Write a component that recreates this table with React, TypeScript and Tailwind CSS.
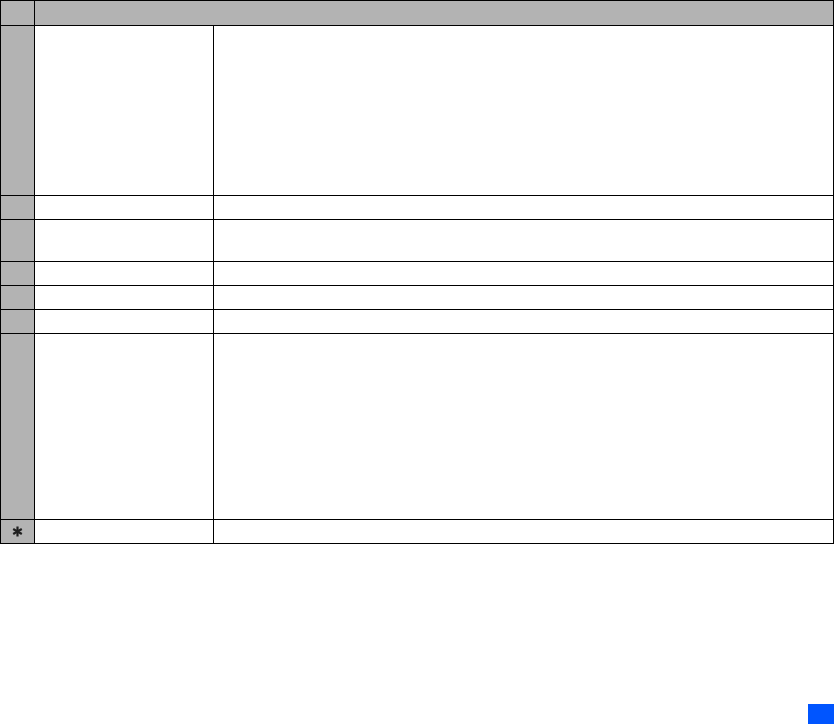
import React from 'react';

// row heights between the horizontal rules, header excluded
const rows = [170, 24, 42, 24, 24, 24, 186];

const Asterisk: React.FC = () => (
  <svg width="11" height="11" viewBox="0 0 11 11" className="block">
    <g stroke="#1f1f1f" strokeWidth="2.2" strokeLinecap="butt">
      <line x1="5.5" y1="0.5" x2="5.5" y2="10.5" />
      <line x1="1.2" y1="3" x2="9.8" y2="8" />
      <line x1="1.2" y1="8" x2="9.8" y2="3" />
    </g>
  </svg>
);

const App: React.FC = () => {
  return (
    <div className="flex h-[724px] w-[835px] flex-col overflow-hidden bg-white font-['Liberation_Sans',sans-serif]">
      <div className="w-[834px] border-l border-t border-black">
        {/* header */}
        <div className="flex h-[25px]">
          <div className="w-[34px] border-b border-r border-black bg-[#b3b3b3]" />
          <div className="w-[799px] border-b border-r border-black bg-[#b3b3b3]" />
        </div>

        {rows.map((h, i) => (
          <div key={i} className="flex" style={{ height: h }}>
            <div className="w-[34px] border-b border-r border-black bg-[#b3b3b3]" />
            <div className="w-[179px] border-b border-r border-black" />
            <div className="w-[620px] border-b border-r border-black" />
          </div>
        ))}

        {/* new record row */}
        <div className="flex h-[24px]">
          <div className="flex w-[34px] items-center justify-center border-b border-r border-black bg-[#b3b3b3]">
            <Asterisk />
          </div>
          <div className="w-[179px] border-b border-r border-black" />
          <div className="w-[620px] border-b border-r border-black" />
        </div>
      </div>

      <div className="mt-auto flex justify-start pl-[808px]">
        <div className="h-[20px] w-[26px] bg-[#0055ff]" />
      </div>
    </div>
  );
};

export default App;
